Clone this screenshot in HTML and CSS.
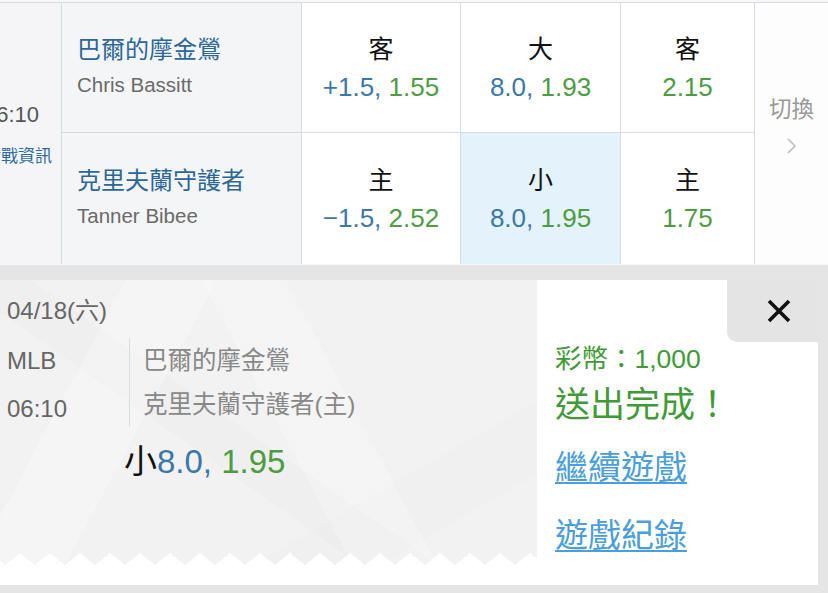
FILE: index.html
```html
<!DOCTYPE html>
<html lang="zh-Hant">
<head>
<meta charset="utf-8">
<title>投注完成</title>
<link rel="stylesheet" href="styles.css">
</head>
<body>
<div class="board">
  <div class="cell side">
    <div class="side-inner">
      <div class="side-time">06:10</div>
      <div class="side-info">對戰資訊</div>
    </div>
  </div>
  <div class="cell team row1">
    <div class="team-name">巴爾的摩金鶯</div>
    <div class="pitcher">Chris Bassitt</div>
  </div>
  <div class="cell odds row1">
    <div class="lbl">客</div>
    <div class="val"><span class="b">+1.5,</span> <span class="g">1.55</span></div>
  </div>
  <div class="cell odds row1">
    <div class="lbl">大</div>
    <div class="val"><span class="b">8.0,</span> <span class="g">1.93</span></div>
  </div>
  <div class="cell odds row1">
    <div class="lbl">客</div>
    <div class="val"><span class="g">2.15</span></div>
  </div>
  <div class="cell switch">
    <div class="switch-text">切換</div>
    <svg class="chev" width="12" height="18" viewBox="0 0 12 18"><polyline points="2,2 9,9 2,16" fill="none" stroke="#bdbdbd" stroke-width="1.6"/></svg>
  </div>
  <div class="cell team">
    <div class="team-name">克里夫蘭守護者</div>
    <div class="pitcher">Tanner Bibee</div>
  </div>
  <div class="cell odds">
    <div class="lbl">主</div>
    <div class="val"><span class="b">&minus;1.5,</span> <span class="g">2.52</span></div>
  </div>
  <div class="cell odds selected">
    <div class="lbl">小</div>
    <div class="val"><span class="b">8.0,</span> <span class="g">1.95</span></div>
  </div>
  <div class="cell odds">
    <div class="lbl">主</div>
    <div class="val"><span class="g">1.75</span></div>
  </div>
</div>

<div class="ticket">
  <div class="ticket-left">
    <div class="ticket-body">
      <div class="t-date">04/18(六)</div>
      <div class="t-match">
        <div class="t-meta">
          <div class="t-meta-line">MLB</div>
          <div class="t-meta-line">06:10</div>
        </div>
        <div class="t-teams">
          <div class="t-team">巴爾的摩金鶯</div>
          <div class="t-team">克里夫蘭守護者(主)</div>
        </div>
      </div>
      <div class="t-pick">小<span class="b">8.0,</span> <span class="g">1.95</span></div>
    </div>
    <div class="zigzag"></div>
    <div class="ticket-foot"></div>
  </div>
  <div class="ticket-right">
    <div class="close-tab">
      <svg width="24" height="24" viewBox="0 0 24 24"><path d="M2 2 L22 22 M22 2 L2 22" stroke="#111" stroke-width="3.6" stroke-linecap="butt"/></svg>
    </div>
    <div class="coins">彩幣：1,000</div>
    <div class="done">送出完成！</div>
    <a class="link first" href="#">繼續遊戲</a>
    <a class="link second" href="#">遊戲紀錄</a>
  </div>
</div>
</body>
</html>
```

FILE: styles.css
```css
* { box-sizing: border-box; }
html, body { margin: 0; padding: 0; }
body {
  width: 828px;
  height: 593px;
  overflow: hidden;
  background: #e5e5e5;
  font-family: "Liberation Sans", "Noto Sans CJK TC", sans-serif;
}

.board {
  display: grid;
  grid-template-columns: 62px 240px 159px 160px 134px 73px;
  grid-template-rows: 131px 131px;
  padding-top: 2px;
  background: #f7f7f7;
  height: 265px;
}
.cell {
  border-right: 1px solid #d6dce3;
  background: #fff;
}
.board > .row1,
.board > .side,
.board > .switch { box-shadow: inset 0 1px 0 #d6dce3; }
.row1 { border-bottom: 1px solid #d6dce3; }

.side {
  grid-row: 1 / 3;
  background: #f5f5f7;
  overflow: hidden;
  padding-top: 98px;
}
.side-inner { margin-left: -16px; white-space: nowrap; }
.side-time { font-size: 22px; line-height: 30px; color: #555; }
.side-info { font-size: 17px; line-height: 26px; color: #2d6a9f; margin-top: 14px; }

.team {
  background: #f4f5f7;
  padding: 31px 0 0 15px;
}
.team-name { font-size: 24px; line-height: 34px; color: #2d6799; }
.pitcher { font-size: 20.5px; line-height: 26px; color: #6a6a6a; margin-top: 5px; }

.odds {
  display: flex;
  flex-direction: column;
  align-items: center;
  padding-top: 30px;
}
.odds.selected { background: #e4f2fc; }
.lbl { font-size: 25px; line-height: 34px; color: #111; }
.val { font-size: 26px; line-height: 34px; margin-top: 4px; white-space: nowrap; }
.b { color: #3b77aa; }
.g { color: #4c9c42; }

.switch {
  grid-row: 1 / 3;
  grid-column: 6;
  border-right: 0;
  background: #fdfdfd;
  display: flex;
  flex-direction: column;
  align-items: center;
  padding-top: 91px;
}
.switch-text { font-size: 22.5px; line-height: 34px; color: #9a9a9a; }
.chev { margin-top: 10px; }

.ticket {
  display: flex;
  margin: 15px 10px 0 0;
  height: 305px;
  background: #fff;
}
.ticket-left {
  width: 537px;
  display: flex;
  flex-direction: column;
  background:
    linear-gradient(118deg, transparent 0 18%, rgba(255,255,255,.22) 18% 31%, transparent 31%),
    linear-gradient(62deg, transparent 0 52%, rgba(255,255,255,.2) 52% 64%, transparent 64%),
    linear-gradient(150deg, transparent 0 70%, rgba(0,0,0,.008) 70% 82%, transparent 82%),
    linear-gradient(35deg, transparent 0 40%, rgba(0,0,0,.01) 40% 48%, transparent 48%),
    #f2f2f2;
}
.ticket-body { flex: 1; padding: 14px 0 0 7px; }
.zigzag {
  height: 12px;
  background-image: conic-gradient(at 50% 0, transparent 128.7deg, #fff 128.7deg 231.3deg, transparent 231.3deg);
  background-size: 30px 12px;
  background-position: 5px 0;
}
.ticket-foot { height: 20px; background: #fff; }

.t-date { font-size: 24px; line-height: 34px; color: #666; }
.t-match { display: flex; margin-top: 10px; }
.t-meta { width: 122px; margin-top: -1px; }
.t-meta-line { font-size: 24px; line-height: 48px; color: #666; }
.t-teams {
  border-left: 1px solid #dcdcdc;
  padding: 1px 0 0 13px;
  align-self: flex-start;
}
.t-team { font-size: 24.5px; line-height: 44px; color: #888; }
.t-pick { font-size: 33px; line-height: 40px; color: #111; margin: 9px 0 0 117px; white-space: nowrap; }

.ticket-right {
  flex: 1;
  position: relative;
  padding: 62px 0 0 18px;
  display: flex;
  flex-direction: column;
  align-items: flex-start;
}
.close-tab {
  position: absolute;
  top: 0;
  right: 0;
  width: 91px;
  height: 62px;
  background: #e4e4e4;
  border-bottom-left-radius: 10px;
  display: flex;
  align-items: center;
  justify-content: center;
  padding-left: 13px;
}
.coins { font-size: 26.5px; line-height: 34px; color: #3f9a37; }
.done { font-size: 35px; line-height: 46px; color: #3f9a37; margin-top: 6px; }
.link {
  font-size: 33px;
  line-height: 40px;
  color: #4a9edb;
  text-decoration: underline;
  text-decoration-thickness: 2px;
  text-underline-offset: 3px;
}
.link.first { margin-top: 20px; }
.link.second { margin-top: 28px; }
```
